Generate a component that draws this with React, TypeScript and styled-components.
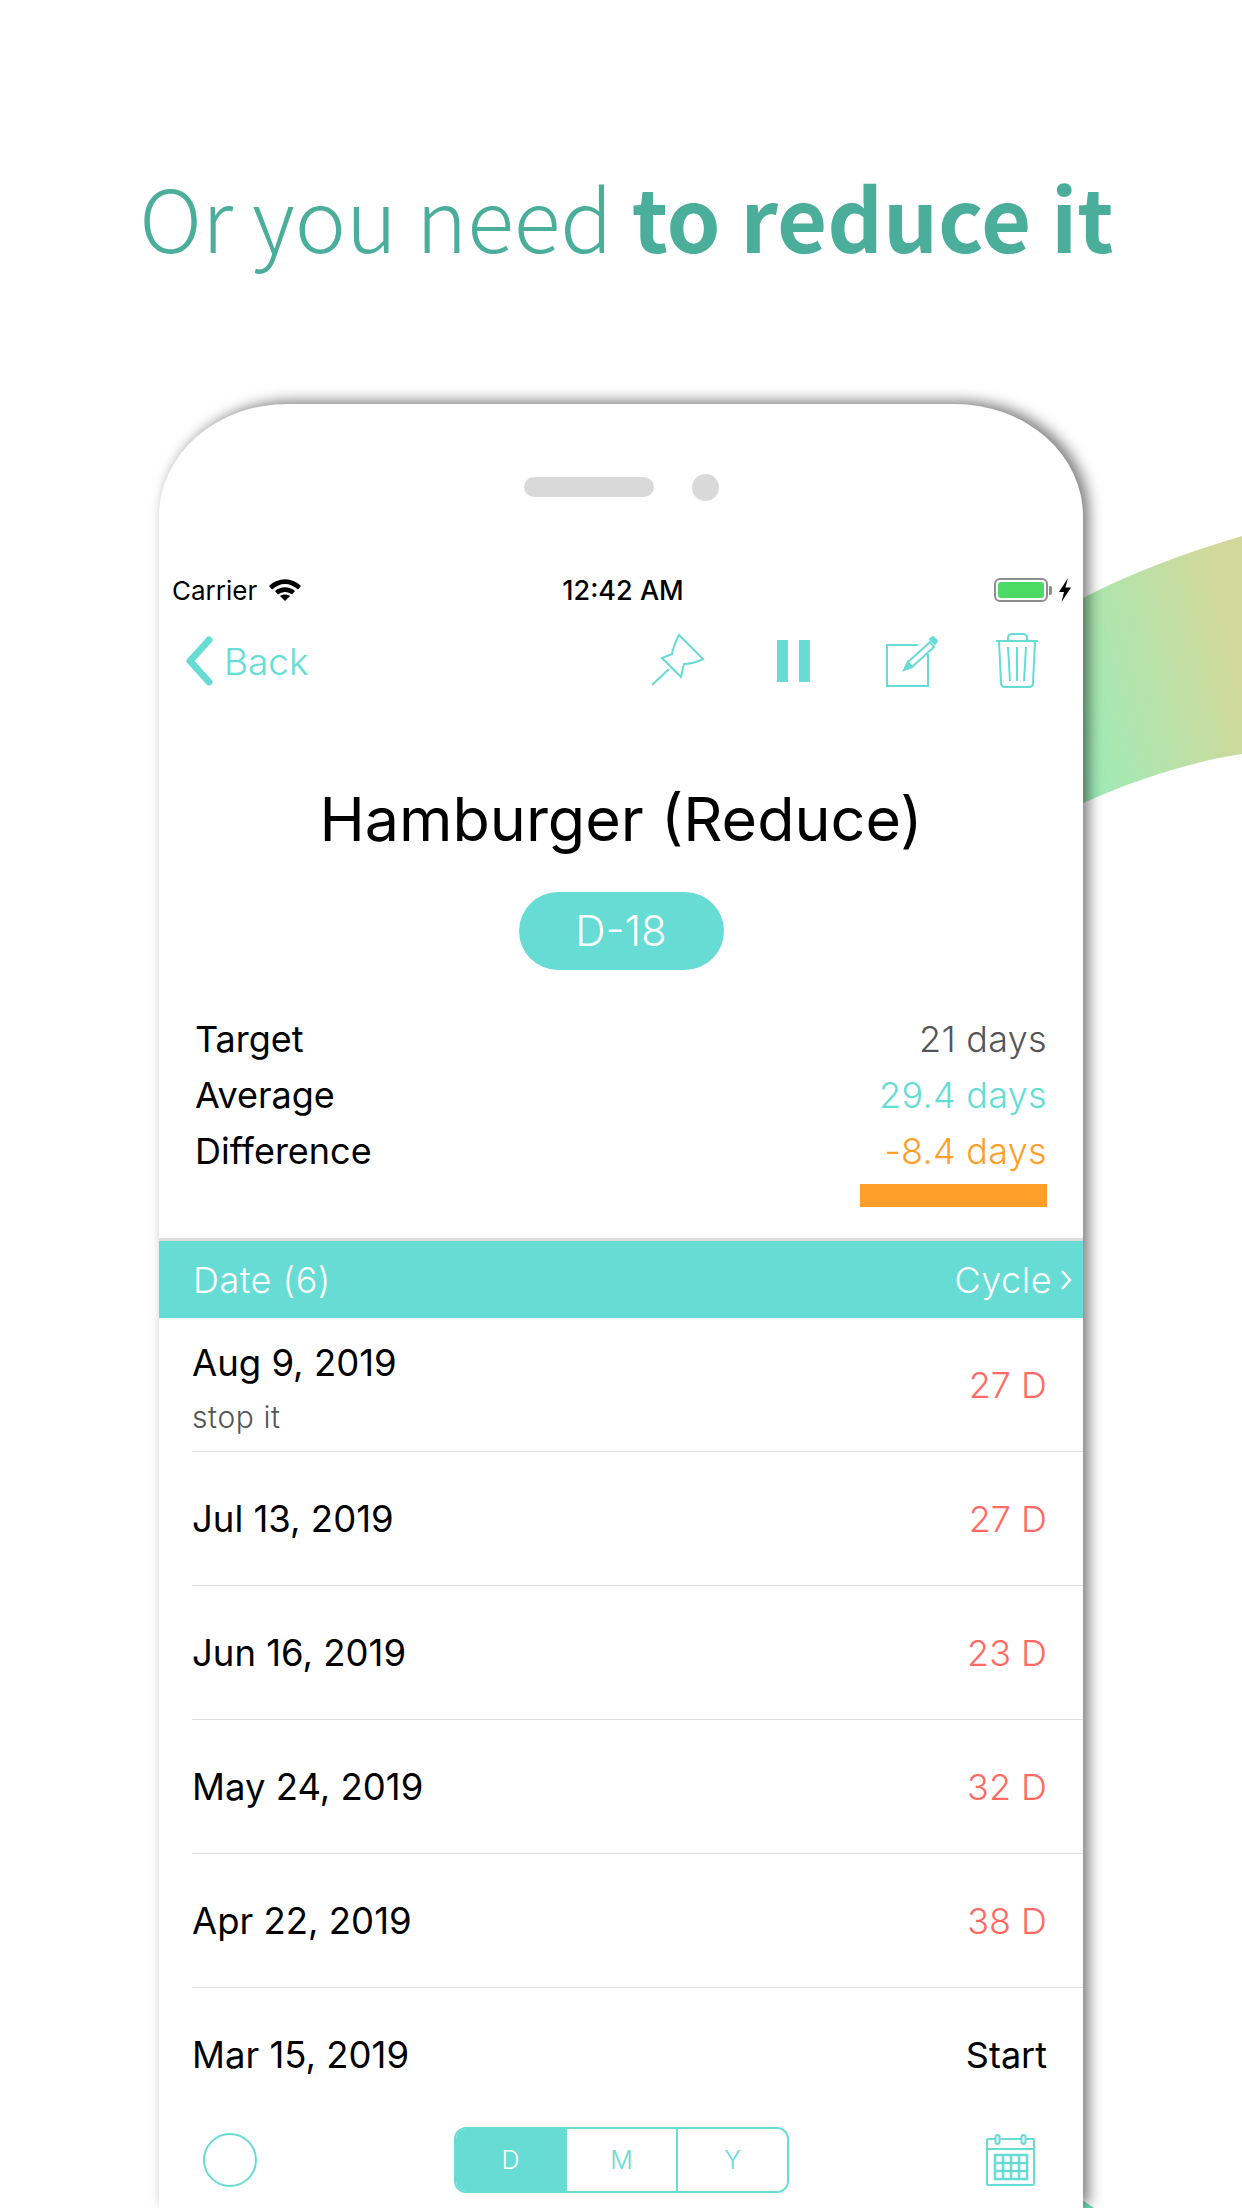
import React, { FC } from "react";
import styled, { createGlobalStyle } from "styled-components";

const TEAL = "#66dcd5";
const SANS = `Inter, "Liberation Sans", sans-serif`;

const rows = [
  { date: "Jul 13, 2019", value: "27 D" },
  { date: "Jun 16, 2019", value: "23 D" },
  { date: "May 24, 2019", value: "32 D" },
  { date: "Apr 22, 2019", value: "38 D" },
  { date: "Mar 15, 2019", value: "Start", plain: true },
];

const App: FC = () => {
  return (
    <Page>
      <GlobalStyle />
      <Ribbon width="159" height="300" viewBox="0 0 159 300">
        <defs>
          <linearGradient id="ribbon" x1="0" y1="1" x2="1" y2="0.6">
            <stop offset="0" stopColor="#9becb9" />
            <stop offset="1" stopColor="#d1d89a" />
          </linearGradient>
        </defs>
        <path d="M0 62 C50 36 105 16 159 0 V218 C105 226 50 245 0 267 Z" fill="url(#ribbon)" />
      </Ribbon>
      <CornerWave width="14" height="8" viewBox="0 0 14 8">
        <path d="M0 0 L12 8 H0 Z" fill="#6fd9bb" />
      </CornerWave>
      <Heading>
        Or you need <strong>to reduce it</strong>
      </Heading>
      <Phone>
        <Notch>
          <Speaker />
          <Camera />
        </Notch>
        <StatusBar>
          <StatusLeft>
            Carrier
            <svg width="32" height="22" viewBox="0 0 32 22">
              <path d="M0 7 C9 -2 23 -2 32 7 L29 10.500 C21 3 11 3 3 10.500 Z" fill="#000" />
              <path d="M6 12 C12 7 20 7 26 12 L23 15.500 C18.500 12 13.500 12 9 15.500 Z" fill="#000" />
              <path d="M11 17 C14 15 18 15 21 17 L16 22 Z" fill="#000" />
            </svg>
          </StatusLeft>
          <StatusTime>12:42 AM</StatusTime>
          <StatusRight>
            <BatteryShell>
              <BatteryLevel />
            </BatteryShell>
            <BatteryTip />
            <svg width="14" height="24" viewBox="0 0 14 24">
              <path d="M10 0 L1 14 H6 L3.500 24 L13 9.500 H7.500 Z" fill="#000" />
            </svg>
          </StatusRight>
        </StatusBar>
        <NavBar>
          <BackLink>
            <svg width="30" height="50" viewBox="0 0 30 50">
              <path d="M25 4 L6 25 L25 46" fill="none" stroke={TEAL} strokeWidth="7" strokeLinecap="round" strokeLinejoin="round" />
            </svg>
            Back
          </BackLink>
          <NavIcons>
            <NavIcon width="56" height="56" viewBox="0 0 56 56" fill="none" stroke={TEAL} strokeWidth="2">
              <path d="M29 2 L53 26 C47 29 41 31 34 31 L31 44 L12 25 L22 21 C23 14 26 8 29 2 Z" />
              <path d="M2 52 L19 36" />
            </NavIcon>
            <NavIcon gap={71} width="34" height="44" viewBox="0 0 34 44" fill={TEAL}>
              <rect x="0" y="1" width="11" height="42" />
              <rect x="22" y="1" width="11" height="42" />
            </NavIcon>
            <NavIcon gap={75} width="54" height="54" viewBox="0 0 54 54" fill="none" stroke={TEAL} strokeWidth="2">
              <path d="M42 20 V52 H1 V11 H32" />
              <path d="M19 35 L22 28 L44 8 L48 13 L26 33 Z" />
              <path d="M18 36 L22 28 L26 33 Z" fill={TEAL} />
              <path d="M44 5 L47 3 L51 7 L49 10 Z" fill={TEAL} />
            </NavIcon>
            <NavIcon gap={55} width="44" height="56" viewBox="0 0 44 56" fill="none" stroke={TEAL} strokeWidth="2">
              <path d="M1 8 H43" />
              <path d="M13 8 V5 Q13 1 17 1 H28 Q32 1 32 5 V8" />
              <path d="M4 8 L6 50 Q6 54 10 54 H34 Q38 54 38 50 L40 8" />
              <path d="M13 14 L15 48 M22 14 V48 M31 14 L29 48" />
            </NavIcon>
          </NavIcons>
        </NavBar>
        <Title>Hamburger (Reduce)</Title>
        <PillRow>
          <Pill>D-18</Pill>
        </PillRow>
        <Stats>
          <StatRow>
            <span>Target</span>
            <StatValue color="#555555">21 days</StatValue>
          </StatRow>
          <StatRow>
            <span>Average</span>
            <StatValue color={TEAL}>29.4 days</StatValue>
          </StatRow>
          <StatRow>
            <span>Difference</span>
            <StatValue color="#ff9f2a">-8.4 days</StatValue>
          </StatRow>
          <OrangeBar />
        </Stats>
        <TableHead>
          <span>Date (6)</span>
          <CycleLabel>
            Cycle
            <svg width="14" height="22" viewBox="0 0 14 22">
              <path d="M3 2 L11 11 L3 20" fill="none" stroke="#fff" strokeWidth="2.500" />
            </svg>
          </CycleLabel>
        </TableHead>
        <List>
          <Row>
            <DateBlock>
              <RowDate>Aug 9, 2019</RowDate>
              <RowNote>stop it</RowNote>
            </DateBlock>
            <RowValue>27 D</RowValue>
          </Row>
          {rows.map((row) => (
            <Row key={row.date}>
              <RowDate>{row.date}</RowDate>
              <RowValue plain={row.plain}>{row.value}</RowValue>
            </Row>
          ))}
        </List>
        <Toolbar>
          <RoundButton />
          <Segments>
            <Segment active>D</Segment>
            <Segment>M</Segment>
            <Segment>Y</Segment>
          </Segments>
          <svg width="50" height="52" viewBox="0 0 50 52" fill="none" stroke={TEAL} strokeWidth="2">
            <rect x="1" y="5" width="47" height="46" rx="1" />
            <path d="M1 15 H48" />
            <rect x="9.500" y="1" width="4" height="9" rx="2" fill="#fff" />
            <rect x="35.500" y="1" width="4" height="9" rx="2" fill="#fff" />
            <path d="M9 21 H41 V45 H9 Z M9 29 H41 M9 37 H41 M17 21 V45 M25 21 V45 M33 21 V45" strokeWidth="2.500" />
          </svg>
        </Toolbar>
      </Phone>
    </Page>
  );
};

const GlobalStyle = createGlobalStyle`
  html, body {
    margin: 0;
    padding: 0;
    background: #fff;
  }
`;

const Page = styled.div`
  position: relative;
  width: 1242px;
  height: 2208px;
  overflow: hidden;
  background: #fff;
  font-family: ${SANS};
`;

const Ribbon = styled.svg`
  position: absolute;
  left: 1083px;
  top: 536px;
`;

const CornerWave = styled.svg`
  position: absolute;
  left: 1082px;
  top: 2200px;
`;

const Heading = styled.h1`
  margin: 0;
  padding: 156px 0 0 11px;
  height: 244px;
  box-sizing: border-box;
  text-align: center;
  font-family: "Noto Sans CJK KR", "Noto Sans", sans-serif;
  font-size: 86.5px;
  line-height: 120px;
  font-weight: 300;
  color: #4bae9b;
  white-space: nowrap;

  strong {
    font-weight: 700;
  }
`;

const Phone = styled.div`
  position: relative;
  display: flex;
  flex-direction: column;
  width: 924px;
  height: 1804px;
  margin: 160px 0 0 159px;
  background: #fff;
  border-radius: 128px 128px 0 0 / 112px 112px 0 0;
  box-shadow: 6px -3px 14px rgba(0, 0, 0, 0.5);
`;

const Notch = styled.div`
  display: flex;
  align-items: center;
  justify-content: center;
  gap: 38px;
  height: 166px;
`;

const Speaker = styled.div`
  width: 130px;
  height: 20px;
  border-radius: 10px;
  background: #d9d9d9;
`;

const Camera = styled.div`
  width: 27px;
  height: 27px;
  border-radius: 50%;
  background: #d9d9d9;
`;

const StatusBar = styled.div`
  display: grid;
  grid-template-columns: 1fr auto 1fr;
  align-items: center;
  height: 40px;
  padding: 0 11px 0 13px;
  font-size: 26px;
  color: #000;
`;

const StatusLeft = styled.div`
  display: flex;
  align-items: center;
  gap: 12px;
`;

const StatusTime = styled.div`
  font-size: 27px;
  font-weight: 500;
  padding-left: 2px;
`;

const StatusRight = styled.div`
  display: flex;
  align-items: center;
  justify-content: flex-end;
`;

const BatteryShell = styled.div`
  width: 54px;
  height: 24px;
  box-sizing: border-box;
  padding: 2px;
  border: 2px solid #8e8e8e;
  border-radius: 6px;
  display: flex;
`;

const BatteryLevel = styled.div`
  flex: 1;
  background: #4cd964;
  border-radius: 3px;
`;

const BatteryTip = styled.div`
  width: 3px;
  height: 9px;
  margin: 0 6px 0 1px;
  background: #8e8e8e;
  border-radius: 0 2px 2px 0;
`;

const NavBar = styled.div`
  display: flex;
  align-items: center;
  justify-content: space-between;
  height: 102px;
  padding: 0 44px 0 25px;
`;

const BackLink = styled.div`
  display: flex;
  align-items: center;
  gap: 10px;
  font-size: 37px;
  font-weight: 300;
  color: ${TEAL};
`;

const NavIcons = styled.div`
  display: flex;
  align-items: center;
`;

const NavIcon = styled.svg<{ gap?: number }>`
  margin-left: ${(props) => props.gap || 0}px;
`;

const Title = styled.div`
  margin-top: 69px;
  text-align: center;
  font-size: 61px;
  line-height: 76px;
  font-weight: 400;
  color: #000;
`;

const PillRow = styled.div`
  display: flex;
  justify-content: center;
  margin-top: 35px;
`;

const Pill = styled.div`
  width: 205px;
  height: 78px;
  border-radius: 39px;
  background: ${TEAL};
  color: #fff;
  font-size: 42px;
  line-height: 78px;
  font-weight: 300;
  text-align: center;
`;

const Stats = styled.div`
  display: flex;
  flex-direction: column;
  padding: 41px 36px 0 36px;
`;

const StatRow = styled.div`
  display: flex;
  justify-content: space-between;
  align-items: center;
  height: 56px;
  font-size: 36px;
  color: #000;
`;

const StatValue = styled.span<{ color: string }>`
  color: ${(props) => props.color};
  font-size: 36px;
  font-weight: 300;
  letter-spacing: 0.3px;
`;

const OrangeBar = styled.div`
  align-self: flex-end;
  width: 187px;
  height: 23px;
  margin-top: 5px;
  background: #ff9f2a;
`;

const TableHead = styled.div`
  display: flex;
  align-items: center;
  justify-content: space-between;
  height: 77px;
  margin-top: 31px;
  padding: 0 10px 0 34px;
  border-top: 3px solid #dddddd;
  background: ${TEAL};
  color: #fff;
  font-size: 36px;
  font-weight: 300;
  letter-spacing: 0.5px;
`;

const CycleLabel = styled.span`
  display: flex;
  align-items: center;
  gap: 7px;
`;

const List = styled.div`
  flex: 1;
  min-height: 0;
  overflow: hidden;
`;

const Row = styled.div`
  display: flex;
  align-items: center;
  justify-content: space-between;
  height: 133px;
  margin-left: 33px;
  padding-right: 36px;
  border-bottom: 1px solid #dedede;
`;

const DateBlock = styled.div`
  padding-top: 5px;
`;

const RowDate = styled.div`
  font-size: 36.5px;
  line-height: 44px;
  font-weight: 400;
  color: #000;
`;

const RowNote = styled.div`
  margin-top: 15px;
  font-size: 30px;
  line-height: 34px;
  font-weight: 300;
  letter-spacing: 0.6px;
  color: #555555;
`;

const RowValue = styled.div<{ plain?: boolean }>`
  font-size: 36px;
  font-weight: ${(props) => (props.plain ? 400 : 300)};
  color: ${(props) => (props.plain ? "#000" : "#ff6a63")};
`;

const Toolbar = styled.div`
  display: flex;
  align-items: center;
  justify-content: space-between;
  height: 96px;
  padding: 0 47px 0 44px;
  background: #fff;
`;

const RoundButton = styled.div`
  width: 54px;
  height: 54px;
  box-sizing: border-box;
  border: 2px solid ${TEAL};
  border-radius: 50%;
`;

const Segments = styled.div`
  display: flex;
  width: 335px;
  height: 66px;
  box-sizing: border-box;
  border: 2px solid ${TEAL};
  border-radius: 12px;
  overflow: hidden;
`;

const Segment = styled.div<{ active?: boolean }>`
  flex: 1;
  display: flex;
  align-items: center;
  justify-content: center;
  font-size: 25px;
  font-weight: 300;
  color: ${(props) => (props.active ? "#fff" : TEAL)};
  background: ${(props) => (props.active ? TEAL : "#fff")};

  & + & {
    border-left: 2px solid ${TEAL};
  }
`;

export default App;
